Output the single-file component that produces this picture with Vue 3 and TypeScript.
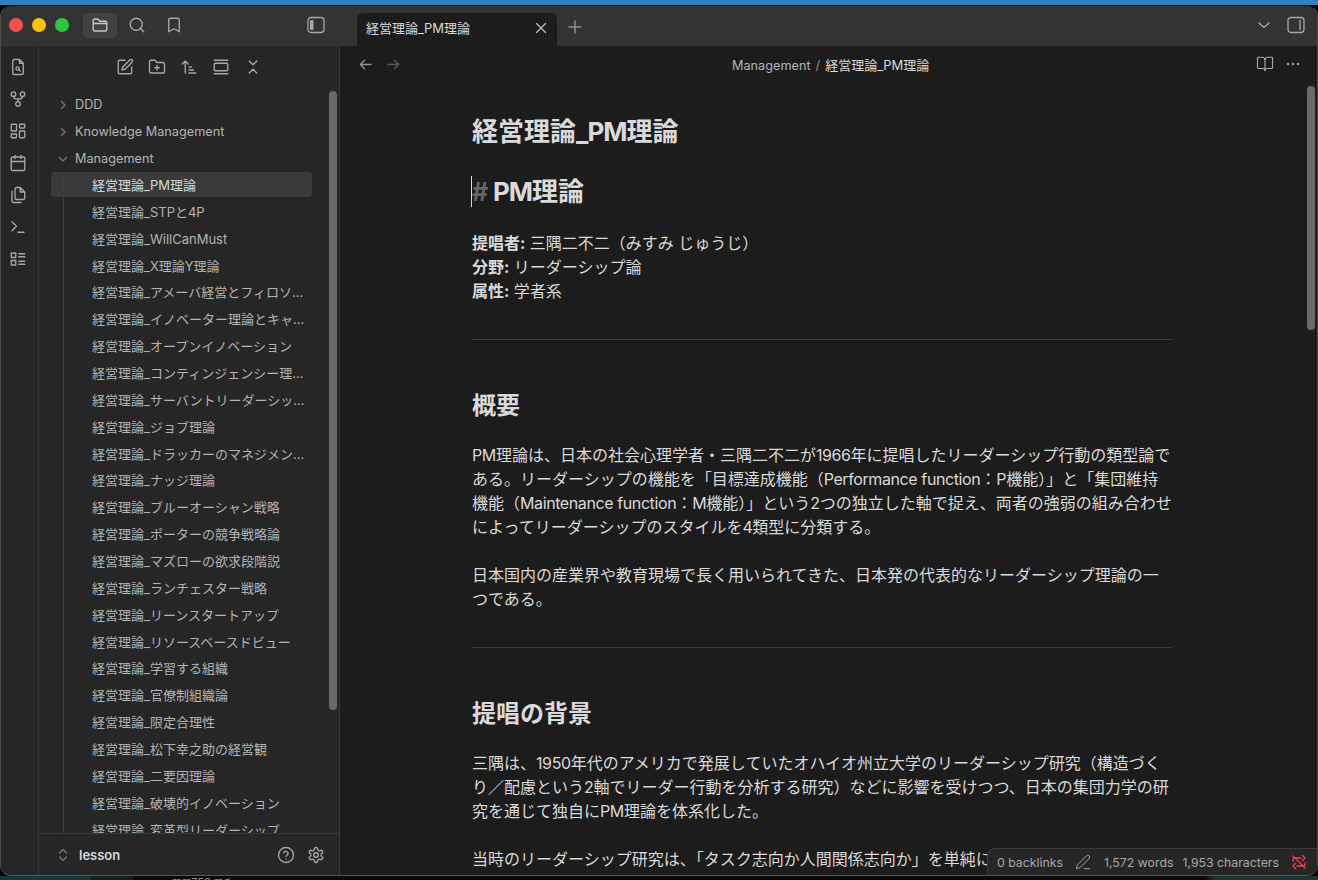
<script setup lang="ts">
const prefix = '経営理論_';
const notes: string[] = [
  'PM理論', 'STPと4P', 'WillCanMust', 'X理論Y理論', 'アメーバ経営とフィロソフィ', 'イノベーター理論とキャズム',
  'オープンイノベーション', 'コンティンジェンシー理論', 'サーバントリーダーシップ', 'ジョブ理論',
  'ドラッカーのマネジメント論', 'ナッジ理論', 'ブルーオーシャン戦略', 'ポーターの競争戦略論', 'マズローの欲求段階説',
  'ランチェスター戦略', 'リーンスタートアップ', 'リソースベースドビュー', '学習する組織', '官僚制組織論', '限定合理性',
  '松下幸之助の経営観', '二要因理論', '破壊的イノベーション', '変革型リーダーシップ'
];
</script>

<template>
  <div class="screen">
    <div class="desk-top"></div>
    <div class="window">
      <header class="titlebar">
        <div class="title-left">
          <div class="lights"><i class="red"></i><i class="yellow"></i><i class="green"></i></div>
          <div class="title-tools">
            <span class="tool active">
              <svg width="18" height="18" viewBox="0 0 24 24"><path d="M3 8V6a2 2 0 0 1 2-2h4l2.5 3H19a2 2 0 0 1 2 2v9a2 2 0 0 1-2 2H5a2 2 0 0 1-2-2z M3 10h18"/></svg>
            </span>
            <span class="tool">
              <svg width="18" height="18" viewBox="0 0 24 24"><circle cx="11" cy="11" r="8"/><path d="m21 21-4.3-4.3"/></svg>
            </span>
            <span class="tool">
              <svg width="18" height="18" viewBox="0 0 24 24"><path d="M19 21l-7-4-7 4V5a2 2 0 0 1 2-2h10a2 2 0 0 1 2 2z"/></svg>
            </span>
          </div>
          <svg class="side-toggle" width="20" height="20" viewBox="0 0 20 20"><rect x="2" y="2.5" width="16" height="15" rx="3"/><rect class="filled" x="4" y="5" width="3.5" height="10" rx="1"/></svg>
        </div>
        <div class="tabs">
          <div class="tab">
            <span class="tab-name">経営理論_PM理論</span>
            <svg width="14" height="14" viewBox="0 0 14 14"><path d="M2.5 2.5l9 9M11.5 2.5l-9 9"/></svg>
          </div>
          <svg class="plus" width="16" height="16" viewBox="0 0 16 16"><path d="M8 2v12M2 8h12"/></svg>
        </div>
        <div class="title-right">
          <svg width="14" height="14" viewBox="0 0 14 14"><path d="M2 5l5 4.5L12 5"/></svg>
          <svg class="side-toggle" width="20" height="20" viewBox="0 0 20 20"><rect x="2" y="2.5" width="16" height="15" rx="3"/><path d="M14 5.5v9"/></svg>
        </div>
      </header>

      <div class="body">
        <nav class="ribbon">
          <svg width="18" height="18" viewBox="0 0 24 24"><path d="M14 2H7a2 2 0 0 0-2 2v16a2 2 0 0 0 2 2h10a2 2 0 0 0 2-2V7z M14 2v5h5"/><circle cx="11.5" cy="14" r="2.2"/><path d="M13.2 15.7l1.8 1.8"/></svg>
          <svg width="18" height="18" viewBox="0 0 24 24"><circle cx="6" cy="5.5" r="3"/><circle cx="18" cy="5.5" r="3"/><circle cx="12" cy="18.5" r="3"/><path d="M6 8.5c0 3 2 3.5 6 3.5s6-.5 6-3.5M12 12v3.5"/></svg>
          <svg width="18" height="18" viewBox="0 0 24 24"><rect x="3" y="3" width="7" height="9" rx="1"/><rect x="14" y="3" width="7" height="5" rx="1"/><rect x="14" y="12" width="7" height="9" rx="1"/><rect x="3" y="16" width="7" height="5" rx="1"/></svg>
          <svg width="18" height="18" viewBox="0 0 24 24"><rect x="3" y="4" width="18" height="18" rx="2"/><path d="M16 2v4M8 2v4M3 10h18"/></svg>
          <svg width="18" height="18" viewBox="0 0 24 24"><path d="M15 2H10a2 2 0 0 0-2 2v12a2 2 0 0 0 2 2h9a2 2 0 0 0 2-2V8z M15 2v6h6"/><path d="M4 7v13a2 2 0 0 0 2 2h10"/></svg>
          <svg width="18" height="18" viewBox="0 0 24 24"><path d="M4 17l6-6-6-6M12 19h8"/></svg>
          <svg width="18" height="18" viewBox="0 0 24 24"><rect x="3" y="4" width="6" height="6"/><rect x="3" y="14" width="6" height="6"/><path d="M13 5h8M13 9h8M13 15h8M13 19h8"/></svg>
        </nav>

        <aside class="sidebar">
          <div class="file-tools">
            <svg width="18" height="18" viewBox="0 0 24 24"><path d="M12 3H5a2 2 0 0 0-2 2v14a2 2 0 0 0 2 2h14a2 2 0 0 0 2-2v-7"/><path d="M18.4 2.6a2.1 2.1 0 0 1 3 3L12 15l-4 1 1-4z"/></svg>
            <svg width="18" height="18" viewBox="0 0 24 24"><path d="M20 20a2 2 0 0 0 2-2V8a2 2 0 0 0-2-2h-8L9.5 3H4a2 2 0 0 0-2 2v13a2 2 0 0 0 2 2z"/><path d="M12 10v6M9 13h6"/></svg>
            <svg width="18" height="18" viewBox="0 0 24 24"><path d="M7 20V4M3 8l4-4 4 4M12 12h3M12 16h6M12 20h9"/></svg>
            <svg width="18" height="18" viewBox="0 0 24 24"><path d="M3 3h18M3 21h18"/><rect x="3" y="7" width="18" height="10" rx="1.5"/></svg>
            <svg width="18" height="18" viewBox="0 0 24 24"><path d="M7 20l5-5 5 5M7 4l5 5 5-5"/></svg>
          </div>

          <div class="tree-wrap">
            <div class="tree">
              <div class="folder">
                <svg width="12" height="12" viewBox="0 0 12 12"><path d="M4.5 2.5L8 6 4.5 9.5"/></svg>DDD
              </div>
              <div class="folder">
                <svg width="12" height="12" viewBox="0 0 12 12"><path d="M4.5 2.5L8 6 4.5 9.5"/></svg>Knowledge Management
              </div>
              <div class="folder">
                <svg width="12" height="12" viewBox="0 0 12 12"><path d="M2.5 4.5L6 8l3.5-3.5"/></svg>Management
              </div>
              <div class="children">
                <div
                  v-for="(note, index) in notes"
                  :key="note"
                  class="note"
                  :class="{ selected: index === 0 }"
                >
                  <span>{{ prefix }}{{ note }}</span>
                </div>
              </div>
            </div>
            <div class="scroll-track side-scroll"></div>
          </div>

          <footer class="vault">
            <svg width="14" height="18" viewBox="0 0 14 18"><path d="M3.5 7L7 3.5 10.5 7M3.5 11L7 14.5 10.5 11"/></svg>
            <span class="vault-name">lesson</span>
            <svg class="help" width="18" height="18" viewBox="0 0 24 24"><circle cx="12" cy="12" r="10"/><path d="M9 9a3 3 0 0 1 5.8 1c0 2-2.8 2.5-2.8 4M12 17.5h.01"/></svg>
            <svg width="18" height="18" viewBox="0 0 24 24"><circle cx="12" cy="12" r="3"/><path d="M12.2 2h-.4a2 2 0 0 0-2 2v.2a2 2 0 0 1-1 1.7l-.4.3a2 2 0 0 1-2 0l-.2-.1a2 2 0 0 0-2.7.7l-.2.4a2 2 0 0 0 .7 2.7l.2.1a2 2 0 0 1 1 1.7v.5a2 2 0 0 1-1 1.8l-.2.1a2 2 0 0 0-.7 2.7l.2.4a2 2 0 0 0 2.7.7l.2-.1a2 2 0 0 1 2 0l.4.3a2 2 0 0 1 1 1.7v.2a2 2 0 0 0 2 2h.4a2 2 0 0 0 2-2v-.2a2 2 0 0 1 1-1.7l.4-.3a2 2 0 0 1 2 0l.2.1a2 2 0 0 0 2.7-.7l.2-.4a2 2 0 0 0-.7-2.7l-.2-.1a2 2 0 0 1-1-1.8v-.5a2 2 0 0 1 1-1.7l.2-.1a2 2 0 0 0 .7-2.7l-.2-.4a2 2 0 0 0-2.7-.7l-.2.1a2 2 0 0 1-2 0l-.4-.3a2 2 0 0 1-1-1.7V4a2 2 0 0 0-2-2z"/></svg>
          </footer>
        </aside>

        <main class="editor">
          <div class="editor-head">
            <div class="history">
              <svg width="15" height="15" viewBox="0 0 16 16"><path d="M14 8H2.5M7 3.5L2.5 8 7 12.5"/></svg>
              <svg class="dim" width="15" height="15" viewBox="0 0 16 16"><path d="M2 8h11.5M9 3.5L13.5 8 9 12.5"/></svg>
            </div>
            <div class="crumb"><span class="crumb-dir">Management</span><span class="crumb-sep">/</span><span>経営理論_PM理論</span></div>
            <div class="head-actions">
              <svg width="18" height="18" viewBox="0 0 24 24"><path d="M12 7v14M3 18a1 1 0 0 1-1-1V4a1 1 0 0 1 1-1h5a4 4 0 0 1 4 4 4 4 0 0 1 4-4h5a1 1 0 0 1 1 1v13a1 1 0 0 1-1 1h-6a3 3 0 0 0-3 3 3 3 0 0 0-3-3z"/></svg>
              <svg width="16" height="16" viewBox="0 0 16 16"><circle class="filled" cx="3" cy="8" r="1.2"/><circle class="filled" cx="8" cy="8" r="1.2"/><circle class="filled" cx="13" cy="8" r="1.2"/></svg>
            </div>
          </div>

          <div class="doc-wrap">
            <article class="doc">
              <h1 class="inline-title">経営理論<span class="lat-tight">_PM</span>理論</h1>
              <h2 class="h1"><span class="caret"></span><span class="hash">#</span><span class="lat-tight">PM</span>理論</h2>
              <p class="meta">
                <b>提唱者:</b> 三隅二不二（みすみ じゅうじ）<br />
                <b>分野:</b> リーダーシップ論<br />
                <b>属性:</b> 学者系
              </p>
              <hr />
              <h3>概要</h3>
              <p><span class="lat">PM</span>理論は、日本の社会心理学者・三隅二不二が<span class="lat">1966</span>年に提唱したリーダーシップ行動の類型論である。リーダーシップの機能を「目標達成機能（<span class="lat">Performance function</span>：<span class="lat">P</span>機能）」と「集団維持機能（<span class="lat">Maintenance function</span>：<span class="lat">M</span>機能）」という<span class="lat">2</span>つの独立した軸で捉え、両者の強弱の組み合わせによってリーダーシップのスタイルを<span class="lat">4</span>類型に分類する。</p>
              <p>日本国内の産業界や教育現場で長く用いられてきた、日本発の代表的なリーダーシップ理論の一つである。</p>
              <hr />
              <h3>提唱の背景</h3>
              <p>三隅は、<span class="lat">1950</span>年代のアメリカで発展していたオハイオ州立大学のリーダーシップ研究（構造づくり／配慮という<span class="lat">2</span>軸でリーダー行動を分析する研究）などに影響を受けつつ、日本の集団力学の研究を通じて独自に<span class="lat">PM</span>理論を体系化した。</p>
              <p>当時のリーダーシップ研究は、「タスク志向か人間関係志向か」を単純に二項対立で捉える傾向が強かった。</p>
            </article>
            <div class="scroll-track doc-scroll"></div>
            <div class="status">
              <span>0 backlinks</span>
              <svg width="16" height="16" viewBox="0 0 24 24"><path d="M21.2 6.8a2.8 2.8 0 0 0-4-4L3.8 16.2a2 2 0 0 0-.5.9L2 22l4.9-1.3a2 2 0 0 0 .9-.5zM14 22h8"/></svg>
              <span class="words">1,572 words</span>
              <span>1,953 characters</span>
              <svg class="sync" width="16" height="16" viewBox="0 0 24 24"><path d="M3 3l18 18M17 2l4 4-4 4M3 11V9a3 3 0 0 1 3-3h9M7 22l-4-4 4-4M21 13v2a3 3 0 0 1-3 3H9"/></svg>
            </div>
          </div>
        </main>
      </div>
    </div>
    <div class="desk-bottom"><span>mm753.md</span></div>
  </div>
</template>

<style>
html,
body {
  margin: 0;
  background: #0a0a0a;
}
</style>

<style scoped>
.screen {
  width: 1318px;
  height: 880px;
  overflow: hidden;
  display: flex;
  flex-direction: column;
  background: #000;
  font-family: Inter, 'Noto Sans CJK JP', sans-serif;
  color: #dadada;
}

svg {
  fill: none;
  stroke: #a8a8a8;
  stroke-width: 1.8;
  stroke-linecap: round;
  stroke-linejoin: round;
  flex: none;
}

svg .filled {
  fill: #a8a8a8;
  stroke: none;
}

.desk-top {
  height: 5px;
  flex: none;
  background: #2f80bd;
}

.window {
  height: 871px;
  flex: none;
  display: flex;
  flex-direction: column;
  overflow: hidden;
  border: 1px solid #4b4b4b;
  border-bottom-color: #555;
  border-top-color: #111;
  border-radius: 11px;
  box-sizing: border-box;
  background: #1c1c1c;
}

.desk-bottom {
  flex: 1;
  overflow: hidden;
  padding-left: 172px;
  font-size: 11px;
  line-height: 13px;
  color: #8a8a8a;
  background: linear-gradient(90deg, #17383a 0, #17383a 90px, #10241c 92px, #10241c 132px, #0a0a0a 134px, #0a0a0a 1205px, #1c3330 1215px, #1c3330 100%);
}

.titlebar {
  height: 40px;
  flex: none;
  display: flex;
  background: #333;
}

.title-left {
  width: 356px;
  flex: none;
  display: flex;
  align-items: center;
  padding: 0 0 2px 8px;
  box-sizing: border-box;
}

.lights {
  display: flex;
  gap: 9px;
}

.lights i {
  width: 14px;
  height: 14px;
  border-radius: 50%;
}

.lights .red {
  background: #fb4d50;
}

.lights .yellow {
  background: #fdc309;
}

.lights .green {
  background: #2dc842;
}

.title-tools {
  display: flex;
  align-items: center;
  gap: 3px;
  margin-left: 14px;
}

.tool {
  width: 34px;
  height: 25px;
  display: flex;
  align-items: center;
  justify-content: center;
  border-radius: 5px;
}

.tool.active {
  background: #424242;
}

.tool.active svg {
  stroke: #c8c8c8;
}

.side-toggle {
  stroke-width: 1.3;
}

.title-left .side-toggle {
  margin-left: 115px;
}

.tabs {
  flex: 1;
  display: flex;
  align-items: flex-end;
}

.tab {
  width: 200px;
  height: 33px;
  display: flex;
  align-items: center;
  justify-content: space-between;
  padding: 0 9px 4px 9px;
  box-sizing: border-box;
  background: #1c1c1c;
  border-radius: 6px 6px 0 0;
  font-size: 13px;
  color: #dadada;
}

.tab svg {
  stroke: #bdbdbd;
  stroke-width: 1.4;
}

.plus {
  margin: 0 0 11px 10px;
  stroke: #8e8e8e;
  stroke-width: 1.5;
}

.title-right {
  display: flex;
  align-items: center;
  gap: 15px;
  padding: 0 11px 2px 0;
}

.title-right svg:first-child {
  stroke-width: 1.3;
}

.body {
  flex: 1;
  min-height: 0;
  display: flex;
}

.ribbon {
  width: 38px;
  flex: none;
  display: flex;
  flex-direction: column;
  align-items: center;
  gap: 14px;
  padding: 12px 4px 0 0;
  box-sizing: border-box;
  background: #262626;
  border-right: 1px solid #363636;
}

.sidebar {
  width: 301px;
  flex: none;
  display: flex;
  flex-direction: column;
  background: #262626;
  border-right: 1px solid #363636;
  box-sizing: border-box;
}

.file-tools {
  height: 42px;
  flex: none;
  display: flex;
  align-items: center;
  justify-content: center;
  gap: 14px;
}

.tree-wrap {
  position: relative;
  flex: 1;
  min-height: 0;
  overflow: hidden;
}

.tree {
  padding: 3px 27px 0 12px;
}

.folder {
  height: 27px;
  display: flex;
  align-items: center;
  gap: 6px;
  padding-left: 6px;
  font-size: 12.7px;
  color: #b4b4b4;
}

.folder svg {
  stroke: #6f6f6f;
  stroke-width: 1.5;
}

.children {
  position: relative;
  margin-left: 12px;
}

.children::before {
  content: '';
  position: absolute;
  z-index: 1;
  left: 0;
  top: 0;
  bottom: 0;
  width: 1px;
  background: #404040;
}

.note {
  height: 25px;
  margin: 0 0 1.87px -12px;
  display: flex;
  align-items: center;
  padding: 0 7px 0 41px;
  font-size: 13px;
  color: #b4b4b4;
  border-radius: 4px;
}

.note span {
  overflow: hidden;
  white-space: nowrap;
  text-overflow: ellipsis;
}

.note.selected {
  background: #3a3a3a;
  color: #dadada;
}

.scroll-track {
  position: absolute;
  width: 8px;
  border-radius: 4px;
  background: #6a6a6a;
}

.side-scroll {
  top: 3px;
  right: 2px;
  height: 619px;
}

.doc-scroll {
  top: 4px;
  right: 2px;
  height: 244px;
}

.vault {
  height: 42px;
  flex: none;
  display: flex;
  align-items: center;
  padding: 0 14px 0 17px;
  gap: 9px;
  background: #262626;
  border-top: 1px solid #363636;
  box-sizing: border-box;
}

.vault > svg:first-child {
  stroke: #777;
  stroke-width: 1.3;
}

.vault-name {
  flex: 1;
  font-size: 13px;
  font-weight: 600;
  color: #dadada;
}

.help {
  margin-right: 3px;
}

.editor {
  flex: 1;
  min-width: 0;
  display: flex;
  flex-direction: column;
  background: #1c1c1c;
}

.editor-head {
  height: 36px;
  flex: none;
  display: flex;
  align-items: center;
  justify-content: space-between;
  padding: 0 16px 0 18px;
  position: relative;
}

.history {
  display: flex;
  gap: 13px;
}

.history .dim {
  stroke: #5a5a5a;
}

.history svg {
  stroke: #8e8e8e;
  stroke-width: 1.4;
}

.crumb {
  position: absolute;
  left: 392px;
  font-size: 13px;
  color: #dadada;
}

.crumb-dir {
  font-size: 12.7px;
  color: #b4b4b4;
}

.crumb-sep {
  margin: 0 5px;
  color: #8e8e8e;
}

.head-actions {
  display: flex;
  align-items: center;
  gap: 11px;
}

.head-actions svg {
  stroke-width: 1.5;
}

.doc-wrap {
  position: relative;
  flex: 1;
  min-height: 0;
  overflow: hidden;
}

.doc {
  width: 700px;
  margin-left: 132px;
  font-size: 16px;
  line-height: 24px;
  color: #dadada;
}

.lat {
  letter-spacing: -0.4px;
}

.lat-tight {
  letter-spacing: -1px;
}

.inline-title {
  margin: 0;
  padding-top: 30px;
  font-size: 26px;
  line-height: 40px;
  font-weight: 700;
}

.h1 {
  position: relative;
  margin: 20px 0 0;
  font-size: 26px;
  line-height: 40px;
  font-weight: 700;
}

.caret {
  position: absolute;
  left: -1px;
  top: 4px;
  width: 1px;
  height: 31px;
  background: #dadada;
}

.hash {
  display: inline-block;
  width: 21px;
  font-size: 25px;
  color: #666;
}

.meta {
  margin: 19px 0 0;
}

.meta b {
  font-weight: 700;
}

hr {
  height: 1px;
  border: 0;
  background: #3c3c3c;
  margin: 36px 0 0;
}

h3 {
  margin: 48px 0 0;
  font-size: 24px;
  line-height: 36px;
  font-weight: 700;
}

.doc p:not(.meta) {
  margin: 24px 0 0;
}

.doc h3 + p {
  margin-top: 19px !important;
}

.status {
  position: absolute;
  right: 0;
  bottom: 0;
  height: 27px;
  display: flex;
  align-items: center;
  padding: 0 10px 0 9px;
  box-sizing: border-box;
  background: #262626;
  border: 1px solid #3c3c3c;
  border-right: 0;
  border-bottom: 0;
  border-radius: 8px 0 0 0;
  font-size: 12.3px;
  color: #a8a8a8;
}

.status svg {
  stroke-width: 1.5;
  margin: 0 13px 0 12px;
}

.status .sync {
  stroke: #f0414f;
  stroke-width: 2;
  margin: 0 0 0 12px;
}

.words {
  margin-right: 9px;
}
</style>
